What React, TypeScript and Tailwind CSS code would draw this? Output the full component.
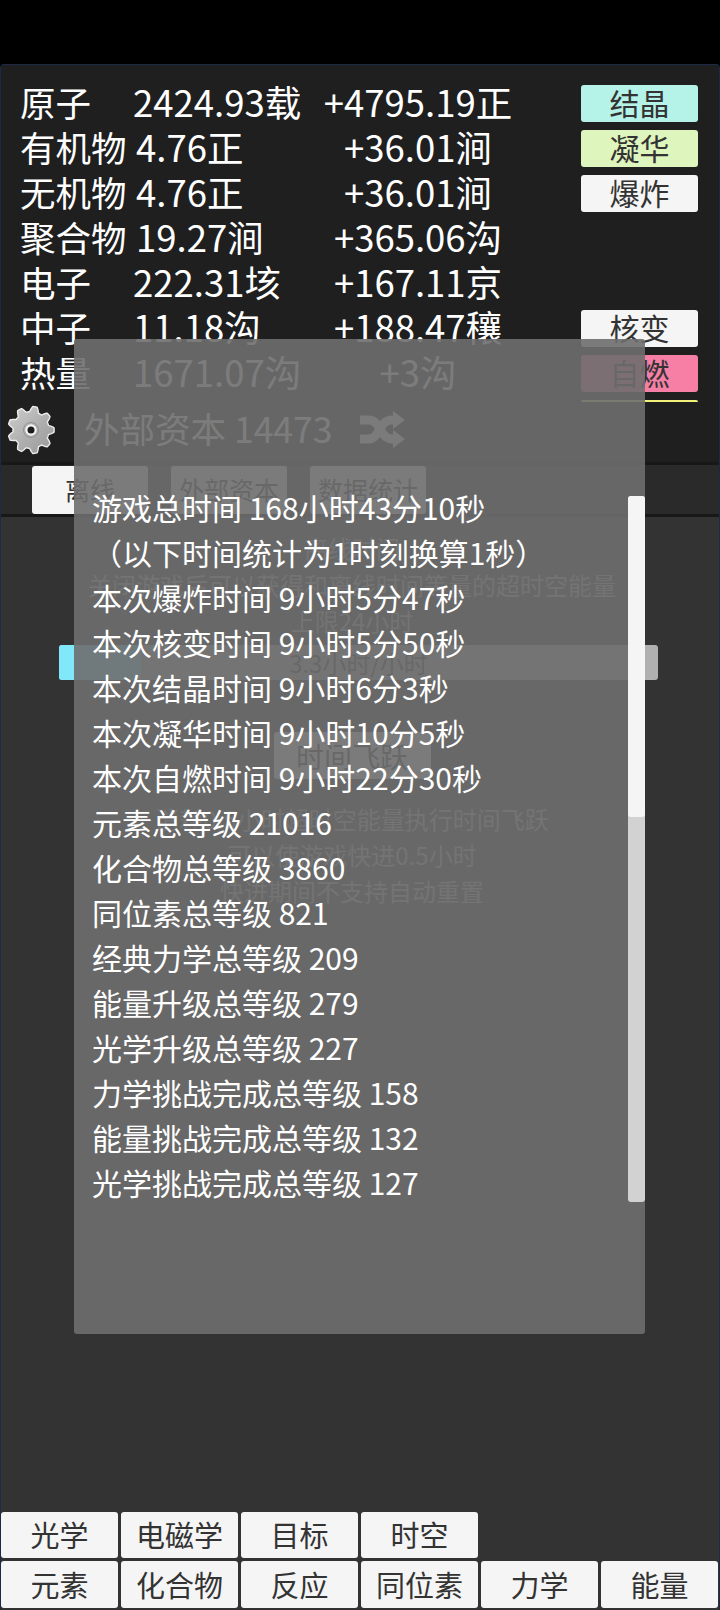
const rows = [
  { name: "原子", value: "2424.93载", rate: "+4795.19正" },
  { name: "有机物", value: "4.76正", rate: "+36.01涧" },
  { name: "无机物", value: "4.76正", rate: "+36.01涧" },
  { name: "聚合物", value: "19.27涧", rate: "+365.06沟" },
  { name: "电子", value: "222.31垓", rate: "+167.11京" },
  { name: "中子", value: "11.18沟", rate: "+188.47穰" },
  { name: "热量", value: "1671.07沟", rate: "+3沟" },
];

const stats = [
  "游戏总时间 168小时43分10秒",
  "（以下时间统计为1时刻换算1秒）",
  "本次爆炸时间 9小时5分47秒",
  "本次核变时间 9小时5分50秒",
  "本次结晶时间 9小时6分3秒",
  "本次凝华时间 9小时10分5秒",
  "本次自燃时间 9小时22分30秒",
  "元素总等级 21016",
  "化合物总等级 3860",
  "同位素总等级 821",
  "经典力学总等级 209",
  "能量升级总等级 279",
  "光学升级总等级 227",
  "力学挑战完成总等级 158",
  "能量挑战完成总等级 132",
  "光学挑战完成总等级 127",
];

const tabsTop = ["光学", "电磁学", "目标", "时空"];
const tabsBottom = ["元素", "化合物", "反应", "同位素", "力学", "能量"];

// gear outline from a smoothed wave round the circle
function gearPath() {
  const teeth = 9;
  const pts: string[] = [];
  for (let i = 0; i < 270; i++) {
    const t = (i / 270) * Math.PI * 2;
    const wave = Math.max(-1, Math.min(1, Math.cos(t * teeth) * 1.5));
    const r = 21 + wave * 2.6;
    pts.push(`${(25 + Math.cos(t) * r * 0.98).toFixed(2)} ${(25 + Math.sin(t) * r).toFixed(2)}`);
  }
  return `M${pts.join("L")}Z`;
}

function Gear() {
  return (
    <svg width="50" height="50" viewBox="0 0 50 50" className="shrink-0">
      <defs>
        <linearGradient id="gearFill" x1="0" y1="0" x2="1" y2="1">
          <stop offset="0" stopColor="#cfcfcf" />
          <stop offset="0.5" stopColor="#b0b0b0" />
          <stop offset="1" stopColor="#979797" />
        </linearGradient>
      </defs>
      <path d={gearPath()} fill="url(#gearFill)" stroke="#ececec" strokeWidth="1.4" strokeLinejoin="round" />
      <circle cx="25" cy="25" r="7.5" fill="none" stroke="#929292" strokeWidth="1" />
      <circle cx="25" cy="25" r="4.6" fill="#1b1b1b" stroke="#f4f4f4" strokeWidth="2.2" />
    </svg>
  );
}

function Shuffle() {
  return (
    <svg width="46" height="38" viewBox="0 0 46 38" className="shrink-0">
      <path d="M1 9h9c5 0 8 3 11 9s6 10 12 10h3" fill="none" stroke="#f2f2f2" strokeWidth="9" />
      <path d="M1 28h9c5 0 8-4 11-10s6-9 12-9h3" fill="none" stroke="#f2f2f2" strokeWidth="9" />
      <path d="M34 0l12 9-12 9zM34 19l12 9-12 9z" fill="#f2f2f2" />
    </svg>
  );
}

function Btn({ label, className }: { label: string; className: string }) {
  return (
    <div className={`flex items-center justify-center rounded-[3px] text-[#333] ${className}`}>
      {label}
    </div>
  );
}

export default function App() {
  return (
    <div className="relative flex h-[1610px] w-[720px] flex-col overflow-hidden bg-black pt-[64px] font-['Noto_Sans_CJK_SC',sans-serif]">
      <div className="flex flex-1 flex-col overflow-hidden rounded-t-[4px] border-x border-t border-[#1c2a45]">
        {/* resources */}
        <div className="flex h-[397px] bg-[#1f1f1f]">
          <div className="flex-1 pl-[19px] pt-[14px] text-[36.5px] leading-[45px] text-white">
            <div className="w-[500px]">
              {rows.map((r) => (
                <div key={r.name} className="grid h-[45px] grid-cols-[113px_190px_190px] whitespace-nowrap">
                  <div className="text-[35.5px]">{r.name}</div>
                  <div className={r.name.length === 3 ? "pl-[3px]" : ""}>{r.value}</div>
                  <div className="text-center">{r.rate}</div>
                </div>
              ))}
            </div>
            <div className="-ml-[14px] mt-[7px] flex h-[58px] items-center text-white">
              <Gear />
              <div className="ml-[28px] mr-[27px] whitespace-nowrap pb-[6px] text-[35.5px]">外部资本 14473</div>
              <Shuffle />
            </div>
          </div>
          <div className="mr-[21px] mt-[20px] flex h-[317px] w-[117px] flex-col gap-[8px] text-[30px]">
            <Btn label="结晶" className="h-[37px] shrink-0 bg-[#b5f3e9] pb-[3px]" />
            <Btn label="凝华" className="h-[37px] shrink-0 bg-[#def5bd] pb-[3px]" />
            <Btn label="爆炸" className="h-[37px] shrink-0 bg-[#f5f5f5] pb-[3px]" />
            <div className="h-[82px] shrink-0" />
            <Btn label="核变" className="h-[37px] shrink-0 bg-[#f5f5f5] pb-[3px]" />
            <Btn label="自燃" className="h-[37px] shrink-0 bg-[#f77fa6] pb-[3px]" />
            <div className="h-[2px] shrink-0 rounded-t-[3px] bg-[#f2f27a]" />
          </div>
        </div>

        {/* sub tabs */}
        <div className="flex h-[55px] gap-[23px] border-y-[3px] border-[#181818] bg-[#2a2a2a] pl-[31px] pt-[1px] text-[25px]">
          <Btn label="离线" className="h-[48px] w-[116px] bg-[#f5f5f5]" />
          <Btn label="外部资本" className="h-[48px] w-[116px] bg-[#f5f5f5]" />
          <Btn label="数据统计" className="h-[48px] w-[116px] bg-[#f5f5f5]" />
        </div>

        {/* offline page */}
        <div className="flex flex-1 flex-col bg-[#333333]">
          <div className="flex flex-col items-center pr-[16px] pt-[13px] text-[24px] leading-[36px] text-[#a8a8a8]">
            <div>离线时间</div>
            <div className="mt-[1px] whitespace-nowrap">关闭游戏后可以获得和离线时间等量的超时空能量</div>
            <div>上限24小时</div>
            <div className="relative ml-[13px] mt-[6px] flex h-[35px] w-[599px] shrink-0 items-center justify-center overflow-hidden rounded-[3px] bg-[#b0b0b0] text-[#333]">
              <div className="absolute inset-y-0 left-0 w-[82px] bg-[#80e8f8]" />
              <span className="relative">3.3小时/小时</span>
            </div>
            <div className="mt-[52px] flex h-[47px] w-[157px] items-center justify-center rounded-[3px] bg-[#f5f5f5] text-[28px] text-[#333]">
              时间飞跃
            </div>
            <div className="mt-[22px]">消耗0.5小时超时空能量执行时间飞跃</div>
            <div>可以使游戏快进0.5小时</div>
            <div>快进期间不支持自动重置</div>
          </div>

          <div className="mt-auto flex flex-col gap-[3px] pb-[2px] text-[29px]">
            <div className="grid grid-cols-[repeat(6,117px)] gap-[3px]">
              {tabsTop.map((t) => (
                <Btn key={t} label={t} className="h-[46px] bg-[#f5f5f5]" />
              ))}
            </div>
            <div className="grid grid-cols-[repeat(6,117px)] gap-[3px]">
              {tabsBottom.map((t) => (
                <Btn key={t} label={t} className="h-[47px] bg-[#f5f5f5]" />
              ))}
            </div>
          </div>
        </div>
      </div>

      {/* stats dialog */}
      <div className="absolute left-[74px] top-[339px] h-[995px] w-[571px] rounded-[3px] bg-[#6e6e6e]/90 pt-[157px]">
        <div className="flex h-[706px]">
          <div className="-mt-[11px] flex-1 pl-[18px] text-[30px] leading-[45px] text-white">
            {stats.map((s) => (
              <div key={s} className="h-[45px] whitespace-nowrap">{s}</div>
            ))}
          </div>
          <div className="w-[17px] rounded-[3px] bg-[#d2d2d2]">
            <div className="h-[321px] rounded-[3px] bg-[#f5f5f5]" />
          </div>
        </div>
      </div>
    </div>
  );
}
